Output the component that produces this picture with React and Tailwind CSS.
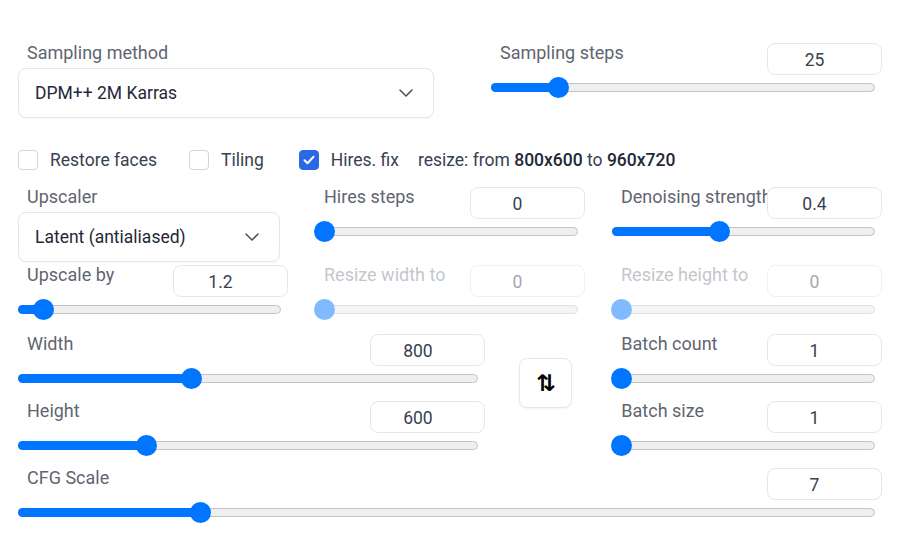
import React from "react";

const font = { fontFamily: "Roboto, 'Noto Sans', sans-serif" };

function Chevron() {
  return (
    <svg width="16" height="10" viewBox="0 0 16 10" fill="none">
      <path d="M2 2l6 6 6-6" stroke="#4b5563" strokeWidth="1.6" strokeLinecap="round" strokeLinejoin="round" />
    </svg>
  );
}

function Dropdown({ label, value }) {
  return (
    <div>
      <div className="pl-[9px] leading-[20px] text-[18px] text-[#5f6571]">{label}</div>
      <div className="mt-[5px] h-[50px] rounded-lg border border-[#e5e7eb] bg-white flex items-center justify-between pl-4 pr-[19px] text-[17.5px] text-[#1f2937] shadow-[0_1px_2px_rgba(0,0,0,0.04)]">
        <span>{value}</span>
        <Chevron />
      </div>
    </div>
  );
}

function Slider({ label, value, min, max, disabled }) {
  const frac = (value - min) / (max - min);
  const pos = `calc(9px + ${frac} * (100% - 18px))`;
  return (
    <div className="h-[56px]">
      <div className="flex items-start h-[32px]">
        <span className={"flex-1 min-w-0 pl-[9px] leading-[20px] text-[18px] whitespace-nowrap " + (disabled ? "text-[#c3c7cd]" : "text-[#5f6571]")}>
          {label}
        </span>
        <div
          className={
            "relative w-[115px] h-[32px] shrink-0 rounded-lg border bg-white flex items-center justify-center pr-[20px] pt-[2px] text-[17.5px] " +
            (disabled ? "border-[#f0f1f3] text-[#a3a8b0]" : "border-[#e5e7eb] text-[#374151]")
          }
        >
          {value}
        </div>
      </div>
      <div className="relative h-[24px] mr-[7px]">
        <div
          className={
            "absolute left-0 right-0 top-[8px] h-[9px] rounded-full border " +
            (disabled ? "bg-[#f5f5f5] border-[#e2e2e2]" : "bg-[#efefef] border-[#c4c4c4]")
          }
        />
        <div
          className={"absolute left-0 top-[8px] h-[9px] rounded-l-full " + (disabled ? "bg-[#80bbff]" : "bg-[#0075ff]")}
          style={{ width: pos }}
        />
        <div
          className={"absolute top-[2px] w-[21px] h-[21px] -ml-[10.5px] rounded-full " + (disabled ? "bg-[#80bbff]" : "bg-[#0075ff]")}
          style={{ left: pos }}
        />
      </div>
    </div>
  );
}

function Checkbox({ label, checked }) {
  return (
    <div className="flex items-center gap-3">
      <div
        className={
          "w-5 h-5 rounded-[4px] border flex items-center justify-center " +
          (checked ? "bg-[#2b68e6] border-[#2b68e6]" : "bg-white border-[#d1d5db]")
        }
      >
        {checked && (
          <svg width="12" height="10" viewBox="0 0 12 10" fill="none">
            <path d="M1.5 5.2l3 3 6-6.4" stroke="white" strokeWidth="2" strokeLinecap="round" strokeLinejoin="round" />
          </svg>
        )}
      </div>
      <span className="text-[17.5px] text-[#374151] leading-[20px]">{label}</span>
    </div>
  );
}

export default function App() {
  return (
    <div className="w-[903px] h-[544px] bg-white pl-[18px] pr-[21px] pt-[43px] overflow-hidden" style={font}>
      <div className="flex gap-[57px]">
        <div className="w-[416px]">
          <Dropdown label="Sampling method" value="DPM++ 2M Karras" />
        </div>
        <div className="w-[391px]">
          <Slider label="Sampling steps" value={25} min={1} max={150} />
        </div>
      </div>

      <div className="mt-[32px] flex items-center h-[20px]">
        <Checkbox label="Restore faces" />
        <div className="ml-[32px]">
          <Checkbox label="Tiling" />
        </div>
        <div className="ml-[35px]">
          <Checkbox label="Hires. fix" checked />
        </div>
        <span className="ml-[19px] text-[17.5px] text-[#374151] leading-[20px]">
          resize: from <span className="font-medium text-[#1f2937]">800x600</span> to{" "}
          <span className="font-medium text-[#1f2937]">960x720</span>
        </span>
      </div>

      <div className="mt-[17px] grid grid-cols-[270px_270px_270px] gap-x-[27px] gap-y-[3px] items-start">
        <div className="h-[75px]">
          <div className="w-[262px]">
            <Dropdown label="Upscaler" value="Latent (antialiased)" />
          </div>
        </div>
        <Slider label="Hires steps" value={0} min={0} max={150} />
        <Slider label="Denoising strength" value={0.4} min={0} max={1} />
        <Slider label="Upscale by" value={1.2} min={1} max={4} />
        <Slider label="Resize width to" value={0} min={0} max={2048} disabled />
        <Slider label="Resize height to" value={0} min={0} max={2048} disabled />
      </div>

      <div className="mt-[13px] flex items-start">
        <div className="w-[468px] flex flex-col gap-[11px]">
          <Slider label="Width" value={800} min={64} max={2048} />
          <Slider label="Height" value={600} min={64} max={2048} />
        </div>
        <div className="ml-[34px] mt-[24px] w-[53px] h-[50px] rounded-lg border border-[#e5e7eb] bg-white flex items-center justify-center shadow-[0_1px_2px_rgba(0,0,0,0.05)]">
          <span className="text-[23px] font-bold text-black leading-none" style={{ fontFamily: "'DejaVu Sans', sans-serif" }}>⇅</span>
        </div>
        <div className="ml-[40px] w-[270px] flex flex-col gap-[11px]">
          <Slider label="Batch count" value={1} min={1} max={100} />
          <Slider label="Batch size" value={1} min={1} max={8} />
        </div>
      </div>

      <div className="mt-[11px]">
        <Slider label="CFG Scale" value={7} min={1} max={30} />
      </div>
    </div>
  );
}
